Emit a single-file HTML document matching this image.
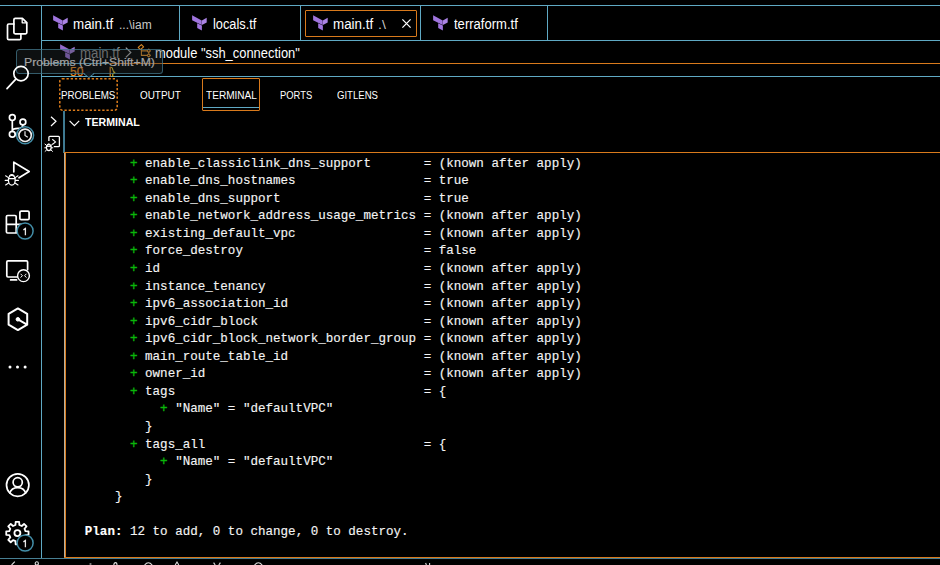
<!DOCTYPE html>
<html>
<head>
<meta charset="utf-8">
<title>VS Code - Terminal</title>
<style>
  html, body { margin: 0; padding: 0; background: #000; }
  body { width: 940px; height: 565px; overflow: hidden; position: relative;
         font-family: "Liberation Sans", sans-serif; color: #fff; }
  .abs { position: absolute; }
  .hl { position: absolute; height: 1px; }
  .vl { position: absolute; width: 1px; }
  .blue { background: #5fa9c4; }
  .orange { background: #d97a1c; }
  .t { position: absolute; white-space: pre; line-height: 1; color: #fff; }
  .tab { font-size: 13.2px; }
  .dim { color: #c8c8c8; font-size: 11.6px; }
  .ptab { font-size: 10.6px; color: #fff; }
  svg { position: absolute; overflow: visible; }
  #term { position: absolute; left: 84.8px; top: 155.6px; margin: 0;
          font-family: "Liberation Mono", monospace; font-size: 12.55px;
          line-height: 17.57px; color: #f4f4f4; white-space: pre; -webkit-text-stroke: 0.14px #f4f4f4; }
  #term .g { color: #0ab60a; -webkit-text-stroke: 0.35px #0ab60a; }
  #term b { font-weight: bold; color: #fff; }
</style>
</head>
<body>

<!-- ===== structural lines ===== -->
<div class="hl blue" style="left:0;top:5px;width:940px"></div>
<div class="hl blue" style="left:41px;top:40px;width:899px"></div>
<div class="vl blue" style="left:41px;top:5px;height:553px"></div>
<div class="vl blue" style="left:179px;top:5px;height:35px"></div>
<div class="vl blue" style="left:300px;top:5px;height:35px"></div>
<div class="vl blue" style="left:420px;top:5px;height:35px"></div>
<div class="vl blue" style="left:547px;top:5px;height:35px"></div>
<div class="hl blue" style="left:42px;top:63px;width:67px"></div>
<div class="hl orange" style="left:109px;top:63px;width:831px"></div>
<div class="hl blue" style="left:42px;top:76px;width:898px"></div>
<div class="vl" style="left:63.2px;top:111px;height:41.5px;width:1.8px;background:#3f7a92"></div>
<div class="vl" style="left:63.5px;top:152.5px;height:405.5px;width:1px;background:#b4b0a0"></div>
<div class="vl orange" style="left:64.5px;top:152.3px;height:405.7px;width:1px"></div>
<div class="hl orange" style="left:64.3px;top:152.2px;width:875.7px;height:1.2px"></div>
<div class="hl orange" style="left:64px;top:557px;width:876px"></div>
<div class="hl blue" style="left:0;top:558px;width:940px;opacity:.75"></div>

<!-- ===== editor tabs ===== -->
<div class="abs" style="left:305px;top:10px;width:112px;height:27px;border:1px solid #d97a1c;box-sizing:border-box;border-radius:1px"></div>

<svg class="tf" style="left:53.3px;top:15.2px" width="15" height="16" viewBox="0 0 15 16"><use href="#tficon"/></svg>
<svg class="tf" style="left:192.3px;top:15.2px" width="15" height="16" viewBox="0 0 15 16"><use href="#tficon"/></svg>
<svg class="tf" style="left:312.7px;top:15.2px" width="15" height="16" viewBox="0 0 15 16"><use href="#tficon"/></svg>
<svg class="tf" style="left:433.2px;top:15.2px" width="15" height="16" viewBox="0 0 15 16"><use href="#tficon"/></svg>
<svg class="tf" style="left:60px;top:43.6px;opacity:.92" width="15" height="16" viewBox="0 0 15 16"><use href="#tficon"/></svg>

<svg width="0" height="0" style="left:0;top:0">
  <defs>
    <g id="tficon">
      <polygon points="0.1,0.2 9.7,5.4 9.7,10 0.1,5.2" fill="#a075de"/>
      <polygon points="9.9,5.4 14.7,2.7 14.7,7.6 9.9,10" fill="#ab84e4"/>
      <polygon points="5.2,8.3 9.9,10.6 9.9,15.6 5.2,13" fill="#a075de"/>
    </g>
  </defs>
</svg>

<div class="t tab" id="t1" style="left:73.04px;top:17.1px;font-size:14px;transform:scaleX(0.955);transform-origin:0 0">main.tf</div>
<div class="t dim" id="t1b" style="left:119.0px;top:19.1px;font-size:12px;transform:scaleX(1.0);transform-origin:0 0">...\iam</div>
<div class="t tab" id="t2" style="left:212.79px;top:17.1px;font-size:14px;transform:scaleX(0.9149);transform-origin:0 0">locals.tf</div>
<div class="t tab" id="t3" style="left:333.05px;top:17.1px;font-size:14px;transform:scaleX(0.955);transform-origin:0 0">main.tf</div>
<div class="t dim" id="t3b" style="left:377.72px;top:19.1px;font-size:12px;transform:scaleX(1.18);transform-origin:0 0">.\</div>
<div class="t tab" id="t4" style="left:454.3px;top:17.1px;font-size:14px;transform:scaleX(0.9319);transform-origin:0 0">terraform.tf</div>
<svg style="left:402.3px;top:18.8px" width="9" height="9" viewBox="0 0 9 9"><path d="M0.4 0.4 L8.6 8.6 M8.6 0.4 L0.4 8.6" stroke="#fff" stroke-width="1.25" fill="none"/></svg>

<!-- ===== breadcrumbs ===== -->
<div class="t tab" id="b1" style="left:79.56px;top:45.6px;color:#8d8d8d;font-size:14px;transform:scaleX(0.945);transform-origin:0 0">main.tf</div>
<svg style="left:125px;top:46.5px" width="7" height="11" viewBox="0 0 7 11"><path d="M0.8 0.6 L5.8 5.5 L0.8 10.4" stroke="#a8a8a8" stroke-width="1.2" fill="none"/></svg>
<svg style="left:136.5px;top:43.5px" width="15" height="15" viewBox="0 0 15 15"><path d="M1.2 3.4 L4.4 0.6 L6.6 2.8 L3.4 5.6 Z M4.4 5 L4.4 11.4 L10 11.4 M4.4 6.9 L10 6.9 M10 6.9 L11.8 5.2 L13.4 6.8 L11.7 8.5 Z M10 11.4 L11.8 9.7 L13.4 11.3 L11.7 13 Z" stroke="#d98a26" stroke-width="1.1" fill="none" stroke-linejoin="round"/></svg>
<div class="t tab" id="b2" style="left:154.78px;top:45.6px;font-size:14px;transform:scaleX(0.9224);transform-origin:0 0">module "ssh_connection"</div>

<!-- misc orange editor remnants -->
<div class="t" id="fifty" style="left:69.6px;top:65.6px;font-family:'Liberation Sans',sans-serif;color:#ea8a1e;-webkit-text-stroke:0.2px #ea8a1e;font-size:12.2px;transform:scaleX(0.98);transform-origin:0 0">50</div>
<svg style="left:109px;top:65.5px" width="8" height="12" viewBox="0 0 8 12"><path d="M1.2 0.8 L1.2 11" stroke="#e0851e" stroke-width="1.2" fill="none"/><path d="M1.8 1.2 Q3.6 1.4 3.8 3.6 Q4 6 6.2 6.6 Q4 7 3.8 8 L3.8 11" stroke="#d8b92a" stroke-width="1.1" fill="none"/></svg>

<!-- ===== panel tabs ===== -->
<svg style="left:59px;top:78px" width="59" height="33" viewBox="0 0 59 33"><rect x="0.8" y="0.8" width="57.4" height="31.4" rx="2.5" fill="none" stroke="#de7d1c" stroke-width="1.5" stroke-dasharray="2.3 1.9"/></svg>
<div class="abs" style="left:202px;top:78px;width:58px;height:33px;border:1px solid #d97a1c;box-sizing:border-box;border-radius:1px"></div>
<div class="hl blue" style="left:203px;top:107px;width:56px"></div>
<div class="t ptab" id="p1" style="left:61.09px;top:89.5px;font-size:10.8px;transform:scaleX(0.9051);transform-origin:0 0">PROBLEMS</div>
<div class="t ptab" id="p2" style="left:140.0px;top:89.5px;font-size:10.8px;transform:scaleX(0.9182);transform-origin:0 0">OUTPUT</div>
<div class="t ptab" id="p3" style="left:205.6px;top:89.5px;font-size:10.8px;transform:scaleX(0.9333);transform-origin:0 0">TERMINAL</div>
<div class="t ptab" id="p4" style="left:280.13px;top:89.5px;font-size:10.8px;transform:scaleX(0.8694);transform-origin:0 0">PORTS</div>
<div class="t ptab" id="p5" style="left:337.0px;top:89.5px;font-size:10.8px;transform:scaleX(0.887);transform-origin:0 0">GITLENS</div>

<!-- terminal header -->
<svg style="left:49.5px;top:115.5px" width="8" height="11" viewBox="0 0 8 11"><path d="M1 0.7 L6 5.3 L1 10" stroke="#fff" stroke-width="1.2" fill="none"/></svg>
<svg style="left:69px;top:119.5px" width="11" height="7" viewBox="0 0 11 7"><path d="M0.6 0.8 L5.4 5.6 L10.2 0.8" stroke="#fff" stroke-width="1.2" fill="none"/></svg>
<div class="t" id="th" style="left:85.0px;top:117.0px;font-weight:bold;font-size:10.8px;transform:scaleX(0.9821);transform-origin:0 0">TERMINAL</div>
<!-- debug console icon -->
<svg style="left:44px;top:134.9px" width="18" height="18" viewBox="0 0 18 18">
  <path d="M4.9 6 L4.9 2.2 Q4.9 1.3 5.8 1.3 L14.5 1.3 Q15.4 1.3 15.4 2.2 L15.4 10.7 Q15.4 11.6 14.5 11.6 L9.8 11.6" stroke="#fff" stroke-width="1.3" fill="none"/>
  <path d="M8.3 4.3 L11.5 6.9 L8.5 9.4" stroke="#fff" stroke-width="1.1" fill="none"/>
  <ellipse cx="4.8" cy="12.6" rx="2.4" ry="3" stroke="#fff" stroke-width="1.3" fill="none"/>
  <path d="M2.6 11.4 L7 11.4 M0.7 8.9 L2.6 10.4 M0.4 12.8 L2.4 12.8 M0.8 16.6 L2.8 14.8 M8.9 8.9 L7 10.4 M9.2 12.8 L7.2 12.8 M8.8 16.6 L6.8 14.8 M3.2 9.6 Q4.8 8 6.4 9.6" stroke="#fff" stroke-width="1" fill="none"/>
</svg>

<!-- ===== terminal text ===== -->
<pre id="term">      <span class="g">+</span> enable_classiclink_dns_support       = (known after apply)
      <span class="g">+</span> enable_dns_hostnames                 = true
      <span class="g">+</span> enable_dns_support                   = true
      <span class="g">+</span> enable_network_address_usage_metrics = (known after apply)
      <span class="g">+</span> existing_default_vpc                 = (known after apply)
      <span class="g">+</span> force_destroy                        = false
      <span class="g">+</span> id                                   = (known after apply)
      <span class="g">+</span> instance_tenancy                     = (known after apply)
      <span class="g">+</span> ipv6_association_id                  = (known after apply)
      <span class="g">+</span> ipv6_cidr_block                      = (known after apply)
      <span class="g">+</span> ipv6_cidr_block_network_border_group = (known after apply)
      <span class="g">+</span> main_route_table_id                  = (known after apply)
      <span class="g">+</span> owner_id                             = (known after apply)
      <span class="g">+</span> tags                                 = {
          <span class="g">+</span> "Name" = "defaultVPC"
        }
      <span class="g">+</span> tags_all                             = {
          <span class="g">+</span> "Name" = "defaultVPC"
        }
    }

<b>Plan:</b> 12 to add, 0 to change, 0 to destroy.</pre>

<!-- ===== tooltip ===== -->
<div class="abs" id="tip" style="left:16px;top:48.6px;width:146.6px;height:25px;box-sizing:border-box;border:1px solid rgba(70,125,145,.7);border-radius:3.5px;background:rgba(38,46,50,.34)"></div>
<div class="t" id="tiptext" style="left:23.91px;top:57.1px;color:#a4a4a4;-webkit-text-stroke:0.2px #a4a4a4;font-size:11.2px;transform:scaleX(1.0907);transform-origin:0 0">Problems (Ctrl+Shift+M)</div>
<svg style="left:83px;top:70px" width="12" height="9" viewBox="0 0 12 9"><path d="M1.6 3.8 L5.9 0.4 L10.2 3.8 L5.9 7.4 Z" fill="#10181f" stroke="none"/><path d="M0.6 3.6 L5.9 7.6 L11.2 3.6" stroke="#4a8fa8" stroke-width="1" fill="none"/></svg>

<!-- ===== activity bar icons ===== -->
<!-- explorer / files -->
<svg style="left:0;top:0" width="42" height="560" viewBox="0 0 42 560" fill="none" stroke="#fff" stroke-width="1.7" stroke-linejoin="round" stroke-linecap="round">
  <!-- files -->
  <path d="M13.9 24 L8.8 24 Q7.5 24 7.5 25.3 L7.5 38.4 Q7.5 39.7 8.8 39.7 L19.6 39.7 Q20.9 39.7 20.9 38.4 L20.9 34"/>
  <path d="M15.2 18.4 L22.4 18.4 L26.8 22.6 L26.8 32.6 Q26.8 33.9 25.5 33.9 L15.2 33.9 Q13.9 33.9 13.9 32.6 L13.9 19.7 Q13.9 18.4 15.2 18.4 Z"/>
  <path d="M22.2 18.6 L22.2 22.8 L26.6 22.8" stroke-width="1.3"/>
  <!-- search -->
  <circle cx="21" cy="73.6" r="7.2"/>
  <path d="M15.6 79.4 L7 88.6"/>
  <!-- source control -->
  <circle cx="12.3" cy="117.6" r="2.9"/>
  <circle cx="22.9" cy="122" r="2.9"/>
  <circle cx="12.3" cy="134.3" r="2.9"/>
  <path d="M12.3 120.6 L12.3 131.3 M22.9 125 Q22.9 128.4 18 128.4 Q12.6 128.4 12.3 131"/>
  <!-- run & debug -->
  <path d="M13.8 171.8 L13.8 162.2 L29.2 171.5 L19 177.8"/>
  <ellipse cx="11.8" cy="180.2" rx="3.4" ry="4.9" stroke-width="1.3"/>
  <path d="M8.6 178.6 L15 178.6 M5.6 175.8 L8.4 177.6 M5.2 180.4 L8.2 180.4 M5.6 185 L8.6 183 M18 175.8 L15.2 177.6 M18.4 180.4 L15.4 180.4 M18 185 L15 183 M9.6 175.6 Q11.8 173.4 14 175.6" stroke-width="1.1"/>
  <!-- extensions -->
  <rect x="19.9" y="211.1" width="9.2" height="8.6" rx="1.3"/>
  <path d="M7.6 215.5 L15 215.5 Q16.2 215.5 16.2 216.7 L16.2 233 L7.6 233 Q6.4 233 6.4 231.8 L6.4 216.7 Q6.4 215.5 7.6 215.5 Z M6.4 224.3 L22 224.3 M16.2 224.3 L16.2 233 L20 233"/>
  <!-- remote explorer -->
  <path d="M18 277 L8 277 Q6.8 277 6.8 275.8 L6.8 262 Q6.8 260.8 8 260.8 L26.4 260.8 Q27.6 260.8 27.6 262 L27.6 269.6 M10.6 279.9 L16.6 279.9"/>
  <!-- hexagon -->
  <path d="M17.9 308.4 L27.2 313.8 L27.2 324.7 L17.9 330.1 L8.6 324.7 L8.6 313.8 Z M17.9 319.3 L26.6 324.3" stroke-width="2"/>
  <circle cx="17.9" cy="319.3" r="1.8" fill="#fff" stroke-width="1"/>
  <!-- ellipsis -->
  <g fill="#fff" stroke="none"><circle cx="10" cy="367" r="1.5"/><circle cx="17.5" cy="367" r="1.5"/><circle cx="25.1" cy="367" r="1.5"/></g>
  <!-- account -->
  <circle cx="17.7" cy="485.1" r="11.2"/>
  <circle cx="17.7" cy="482.3" r="4.6"/>
  <path d="M9.8 493 Q11.4 487.6 17.7 487.6 Q24 487.6 25.6 493"/>
</svg>

<!-- remote badge -->
<svg style="left:16px;top:268px" width="16" height="16" viewBox="0 0 16 16">
  <circle cx="7.5" cy="7.7" r="5.9" fill="#000" stroke="#fff" stroke-width="1.4"/>
  <path d="M4.6 5.8 L6.4 7.7 L4.6 9.6 M10.4 5.8 L8.6 7.7 L10.4 9.6" stroke="#fff" stroke-width="1" fill="none"/>
</svg>
<!-- scm clock badge -->
<svg style="left:15px;top:125px" width="20" height="20" viewBox="0 0 20 20">
  <circle cx="10.1" cy="10.3" r="8.5" fill="#000" stroke="#438ea8" stroke-width="1.5"/>
  <circle cx="10.1" cy="10.3" r="6.2" fill="#000" stroke="#f0f0f0" stroke-width="1.6"/>
  <path d="M10 6.2 L10 10.4 L12.8 12.2" stroke="#e8e8e8" stroke-width="1.2" fill="none"/>
</svg>
<!-- extensions badge -->
<svg style="left:15px;top:221px" width="20" height="20" viewBox="0 0 20 20">
  <circle cx="10.1" cy="10" r="8" fill="#000" stroke="#438ea8" stroke-width="1.5"/>
  <path d="M8.4 8.9 L10.4 7.5 L10.4 14.2" stroke="#e6e6e6" stroke-width="1.3" fill="none"/>
</svg>
<!-- gear -->
<svg style="left:4px;top:520px" width="27" height="27" viewBox="0 0 27 27">
  <g transform="translate(13.4,13.1)">
    <path d="M-1.94 -8.07 L-1.77 -11.16 L1.77 -11.16 L1.94 -8.07 L4.34 -7.08 L6.64 -9.14 L9.14 -6.64 L7.08 -4.34 L8.07 -1.94 L11.16 -1.77 L11.16 1.77 L8.07 1.94 L7.08 4.34 L9.14 6.64 L6.64 9.14 L4.34 7.08 L1.94 8.07 L1.77 11.16 L-1.77 11.16 L-1.94 8.07 L-4.34 7.08 L-6.64 9.14 L-9.14 6.64 L-7.08 4.34 L-8.07 1.94 L-11.16 1.77 L-11.16 -1.77 L-8.07 -1.94 L-7.08 -4.34 L-9.14 -6.64 L-6.64 -9.14 L-4.34 -7.08 Z" stroke="#fff" stroke-width="1.8" fill="none" stroke-linejoin="round"/>
    <circle cx="0" cy="0" r="3" stroke="#fff" stroke-width="1.8" fill="none"/>
  </g>
</svg>
<!-- gear badge -->
<svg style="left:15px;top:532.6px" width="20" height="20" viewBox="0 0 20 20">
  <circle cx="10.1" cy="10" r="8" fill="#000" stroke="#438ea8" stroke-width="1.5"/>
  <path d="M8.4 8.9 L10.4 7.5 L10.4 14.2" stroke="#e6e6e6" stroke-width="1.3" fill="none"/>
</svg>

<!-- ===== status bar fragments ===== -->
<svg style="left:0;top:559px" width="940" height="6" viewBox="0 0 940 6" fill="none" stroke="#ddd" stroke-width="1.1">
  <path d="M11.6 6 L14.8 2.6"/>
  <circle cx="36.8" cy="4.4" r="1.6"/>
  <path d="M89.6 5 L91.4 5"/>
  <path d="M113.8 6 Q114 3.6 115.6 3.6 Q117 3.6 117 6"/>
  <path d="M144.6 6 Q148.4 1.6 152.2 6"/>
  <path d="M175.2 6 L177 3 L178.8 6"/>
  <path d="M213.6 3.6 L215.2 6 M220.4 3.6 L218.8 6"/>
  <path d="M254.6 6 Q258.4 1.6 262.2 6"/>
  <path d="M425.6 4 L426.4 6 M429.6 4 L429.6 6"/>
</svg>

</body>
</html>
